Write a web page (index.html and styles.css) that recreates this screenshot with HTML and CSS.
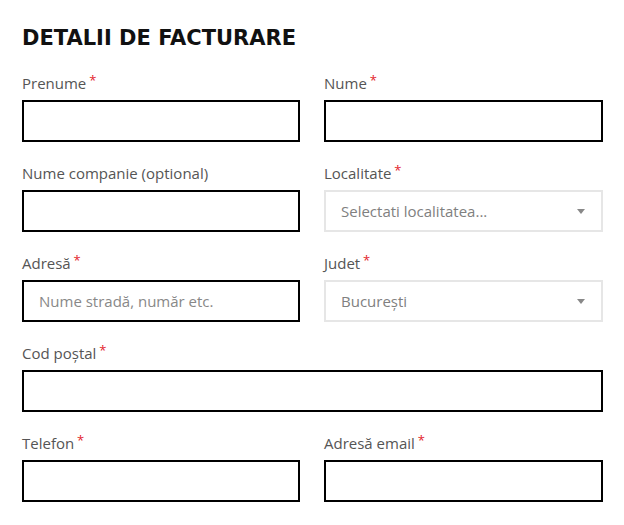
FILE: index.html
```html
<!DOCTYPE html>
<html lang="ro">
<head>
<meta charset="utf-8">
<title>Detalii de facturare</title>
<link rel="stylesheet" href="styles.css">
</head>
<body>
<div class="billing">
  <h3 class="title">DETALII DE FACTURARE</h3>
  <div class="grid">
    <div class="field">
      <label class="label">Prenume <abbr class="req">*</abbr></label>
      <input class="input" type="text">
    </div>
    <div class="field">
      <label class="label">Nume <abbr class="req">*</abbr></label>
      <input class="input" type="text">
    </div>
    <div class="field">
      <label class="label">Nume companie (optional)</label>
      <input class="input" type="text">
    </div>
    <div class="field">
      <label class="label">Localitate <abbr class="req">*</abbr></label>
      <div class="select">
        <span class="select-text">Selectati localitatea...</span>
        <svg class="arrow" width="8" height="5" viewBox="0 0 8 5"><path d="M0 0h8L4 5z" fill="#888"/></svg>
      </div>
    </div>
    <div class="field">
      <label class="label">Adresă <abbr class="req">*</abbr></label>
      <input class="input" type="text" placeholder="Nume stradă, număr etc.">
    </div>
    <div class="field">
      <label class="label">Judet <abbr class="req">*</abbr></label>
      <div class="select">
        <span class="select-text">București</span>
        <svg class="arrow" width="8" height="5" viewBox="0 0 8 5"><path d="M0 0h8L4 5z" fill="#888"/></svg>
      </div>
    </div>
    <div class="field wide">
      <label class="label">Cod poștal <abbr class="req">*</abbr></label>
      <input class="input" type="text">
    </div>
    <div class="field">
      <label class="label">Telefon <abbr class="req">*</abbr></label>
      <input class="input" type="text">
    </div>
    <div class="field">
      <label class="label">Adresă email <abbr class="req">*</abbr></label>
      <input class="input" type="text">
    </div>
  </div>
</div>
</body>
</html>
```

FILE: styles.css
```css
html, body {
  margin: 0;
  padding: 0;
  background: #fff;
}
.billing {
  padding: 24px 21px 0 22px;
  font-family: "Open Sans", "DejaVu Sans", sans-serif;
  color: #555;
}
.title {
  margin: 0 0 21px 0;
  font-family: "DejaVu Sans", sans-serif;
  font-weight: bold;
  font-size: 21px;
  line-height: 28px;
  color: #111;
  letter-spacing: 0;
}
.grid {
  display: grid;
  grid-template-columns: 278px 1fr;
  column-gap: 24px;
  row-gap: 21px;
}
.wide {
  grid-column: 1 / span 2;
}
.field {
  display: flex;
  flex-direction: column;
}
.label {
  display: block;
  height: 20px;
  font-size: 15px;
  line-height: 20px;
  margin-bottom: 7px;
  color: #555;
}
.req {
  color: #e3232b;
  text-decoration: none;
  font-size: 13px;
  line-height: 0;
  position: relative;
  top: -4px;
  margin-left: -1px;
}
.input {
  box-sizing: border-box;
  height: 42px;
  width: 100%;
  margin: 0;
  border: 2px solid #000;
  border-radius: 0;
  padding: 0 15px;
  font-family: inherit;
  font-size: 15px;
  background: #fff;
  outline: none;
}
.input::placeholder {
  color: #888;
  opacity: 1;
}
.select {
  box-sizing: border-box;
  height: 42px;
  border: 2px solid #e6e6e6;
  padding: 0 16px 0 15px;
  display: flex;
  align-items: center;
  justify-content: space-between;
}
.select-text {
  font-size: 15px;
  color: #808080;
}
.arrow {
  display: block;
}
```
